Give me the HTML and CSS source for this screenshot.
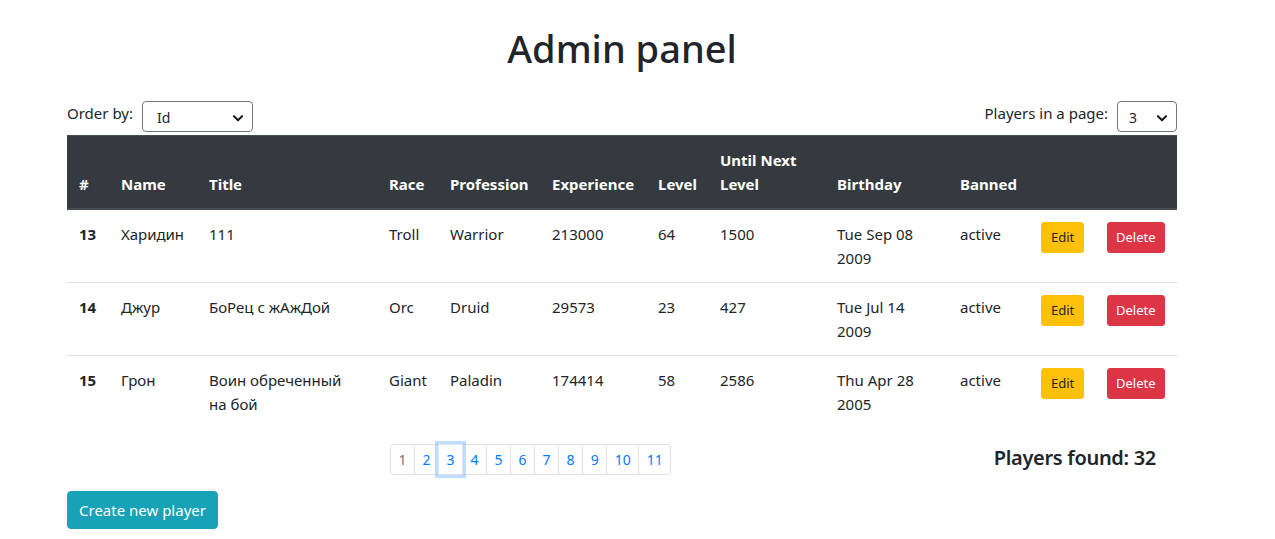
FILE: index.html
```html
<!DOCTYPE html>
<html lang="en">
<head>
<meta charset="utf-8">
<title>Admin panel</title>
<link rel="stylesheet" href="styles.css">
</head>
<body>
<div class="container">
  <h1 class="title">Admin panel</h1>

  <div class="controls">
    <div class="control">
      <label class="control-label" for="order">Order by:</label>
      <div class="select select-order">
        <span class="select-value">Id</span>
        <svg class="chevron" viewBox="0 0 16 16" width="12" height="12"><path d="M2.5 5.5 L8 11 L13.5 5.5" fill="none" stroke="#111" stroke-width="2.6" stroke-linecap="round" stroke-linejoin="round"/></svg>
      </div>
    </div>
    <div class="control">
      <label class="control-label">Players in a page:</label>
      <div class="select select-count">
        <span class="select-value">3</span>
        <svg class="chevron" viewBox="0 0 16 16" width="12" height="12"><path d="M2.5 5.5 L8 11 L13.5 5.5" fill="none" stroke="#111" stroke-width="2.6" stroke-linecap="round" stroke-linejoin="round"/></svg>
      </div>
    </div>
  </div>

  <table class="players">
    <colgroup>
      <col class="c-id"><col class="c-name"><col class="c-title"><col class="c-race"><col class="c-prof"><col class="c-exp"><col class="c-level"><col class="c-until"><col class="c-birth"><col class="c-banned"><col class="c-edit"><col class="c-delete">
    </colgroup>
    <thead>
      <tr>
        <th>#</th><th>Name</th><th>Title</th><th>Race</th><th>Profession</th><th>Experience</th><th>Level</th><th>Until Next Level</th><th>Birthday</th><th>Banned</th><th></th><th></th>
      </tr>
    </thead>
    <tbody>
      <tr>
        <th class="row-id">13</th><td>Харидин</td><td class="cell-title">111</td><td>Troll</td><td>Warrior</td><td>213000</td><td>64</td><td>1500</td><td>Tue Sep 08 2009</td><td>active</td>
        <td><button class="btn btn-sm btn-warning">Edit</button></td><td><button class="btn btn-sm btn-danger">Delete</button></td>
      </tr>
      <tr>
        <th class="row-id">14</th><td>Джур</td><td class="cell-title">БоРец с жАжДой</td><td>Orc</td><td>Druid</td><td>29573</td><td>23</td><td>427</td><td>Tue Jul 14 2009</td><td>active</td>
        <td><button class="btn btn-sm btn-warning">Edit</button></td><td><button class="btn btn-sm btn-danger">Delete</button></td>
      </tr>
      <tr>
        <th class="row-id">15</th><td>Грон</td><td class="cell-title">Воин обреченный на бой</td><td>Giant</td><td>Paladin</td><td>174414</td><td>58</td><td>2586</td><td>Thu Apr 28 2005</td><td>active</td>
        <td><button class="btn btn-sm btn-warning">Edit</button></td><td><button class="btn btn-sm btn-danger">Delete</button></td>
      </tr>
    </tbody>
  </table>

  <div class="footer-row">
    <ul class="pagination">
      <li class="page-item"><a class="page-link page-first">1</a></li>
      <li class="page-item"><a class="page-link">2</a></li>
      <li class="page-item"><a class="page-link page-focus">3</a></li>
      <li class="page-item"><a class="page-link">4</a></li>
      <li class="page-item"><a class="page-link">5</a></li>
      <li class="page-item"><a class="page-link">6</a></li>
      <li class="page-item"><a class="page-link">7</a></li>
      <li class="page-item"><a class="page-link">8</a></li>
      <li class="page-item"><a class="page-link">9</a></li>
      <li class="page-item"><a class="page-link">10</a></li>
      <li class="page-item"><a class="page-link page-last">11</a></li>
    </ul>
    <h4 class="found">Players found: 32</h4>
  </div>

  <button class="btn btn-info">Create new player</button>
</div>
</body>
</html>
```

FILE: styles.css
```css
* { box-sizing: border-box; }

body {
  margin: 0;
  font-family: "Noto Sans", "Open Sans", sans-serif;
  font-size: 16px;
  line-height: 1.5;
  color: #212529;
  background: #fff;
}

.container {
  width: 1110px;
  margin-left: 67px;
  padding-top: 24px;
}

.title {
  margin: 0 0 29px;
  font-size: 38px;
  font-weight: 500;
  line-height: 48px;
  text-align: center;
}

.controls {
  display: flex;
  justify-content: space-between;
  align-items: center;
  height: 31px;
  margin-bottom: 3px;
}

.control {
  display: flex;
  align-items: center;
  gap: 9px;
}

.control-label {
  font-size: 15px;
  position: relative;
  top: -3px;
}

.select {
  display: flex;
  align-items: center;
  justify-content: space-between;
  height: 31px;
  border: 1px solid #767676;
  border-radius: 4px;
  padding: 2px 8px 0 14px;
  font-size: 14px;
  background: #fff;
}

.select-order { width: 111px; }
.select-count { width: 60px; padding-left: 11px; }

.chevron { display: block; }

.players {
  width: 100%;
  table-layout: fixed;
  border-collapse: collapse;
  margin-bottom: 16px;
}

.c-id { width: 42px; }
.c-name { width: 88px; }
.c-title { width: 180px; }
.c-race { width: 61px; }
.c-prof { width: 102px; }
.c-exp { width: 106px; }
.c-level { width: 62px; }
.c-until { width: 117px; }
.c-birth { width: 123px; }
.c-banned { width: 81px; }
.c-edit { width: 66px; }
.c-delete { width: 82px; }

.players th,
.players td {
  padding: 12px;
  vertical-align: top;
  text-align: left;
  line-height: 24px;
  border-top: 1px solid #dee2e6;
}

.players thead th {
  vertical-align: bottom;
  background: #343a40;
  color: #fff;
  font-weight: 700;
  font-size: 15px;
  border-top: 1px solid #454d55;
  border-bottom: 2px solid #454d55;
}

.players tbody tr:first-child th,
.players tbody tr:first-child td {
  border-top: 0;
}

.players td { font-size: 15px; }
.players td.cell-title { padding-right: 30px; }
.row-id { font-weight: 700; font-size: 15px; }

.btn {
  display: inline-block;
  font-family: inherit;
  font-weight: 400;
  border: 1px solid transparent;
  cursor: pointer;
}

.btn-sm {
  font-size: 13px;
  line-height: 21px;
  padding: 4px 8px;
  border-radius: 3px;
  vertical-align: top;
}

.btn-warning {
  background: #ffc107;
  border-color: #ffc107;
  color: #212529;
  padding: 4px 9px;
}

.btn-danger {
  background: #dc3545;
  border-color: #dc3545;
  color: #fff;
}

.btn-info {
  background: #17a2b8;
  border-color: #17a2b8;
  color: #fff;
  font-size: 15px;
  line-height: 24px;
  padding: 6px 11px;
  border-radius: 4px;
}

.footer-row {
  display: flex;
  align-items: center;
  justify-content: space-between;
  margin-bottom: 16px;
}

.pagination {
  display: flex;
  list-style: none;
  margin: 0 0 0 323px;
  padding: 0;
}

.page-link {
  position: relative;
  display: block;
  padding: 4px 7.5px;
  margin-left: -1px;
  font-size: 14px;
  line-height: 21px;
  color: #007bff;
  background: #fff;
  border: 1px solid #dee2e6;
}

.page-first {
  margin-left: 0;
  color: #6c757d;
  border-radius: 3px 0 0 3px;
}

.page-last { border-radius: 0 3px 3px 0; }

.page-focus {
  z-index: 3;
  box-shadow: 0 0 0 3px rgba(0, 123, 255, 0.25);
}

.found {
  margin: 0 21px 0 0;
  font-size: 20px;
  font-weight: 600;
  line-height: 1.2;
  letter-spacing: -0.3px;
  position: relative;
  top: -2px;
}
```
